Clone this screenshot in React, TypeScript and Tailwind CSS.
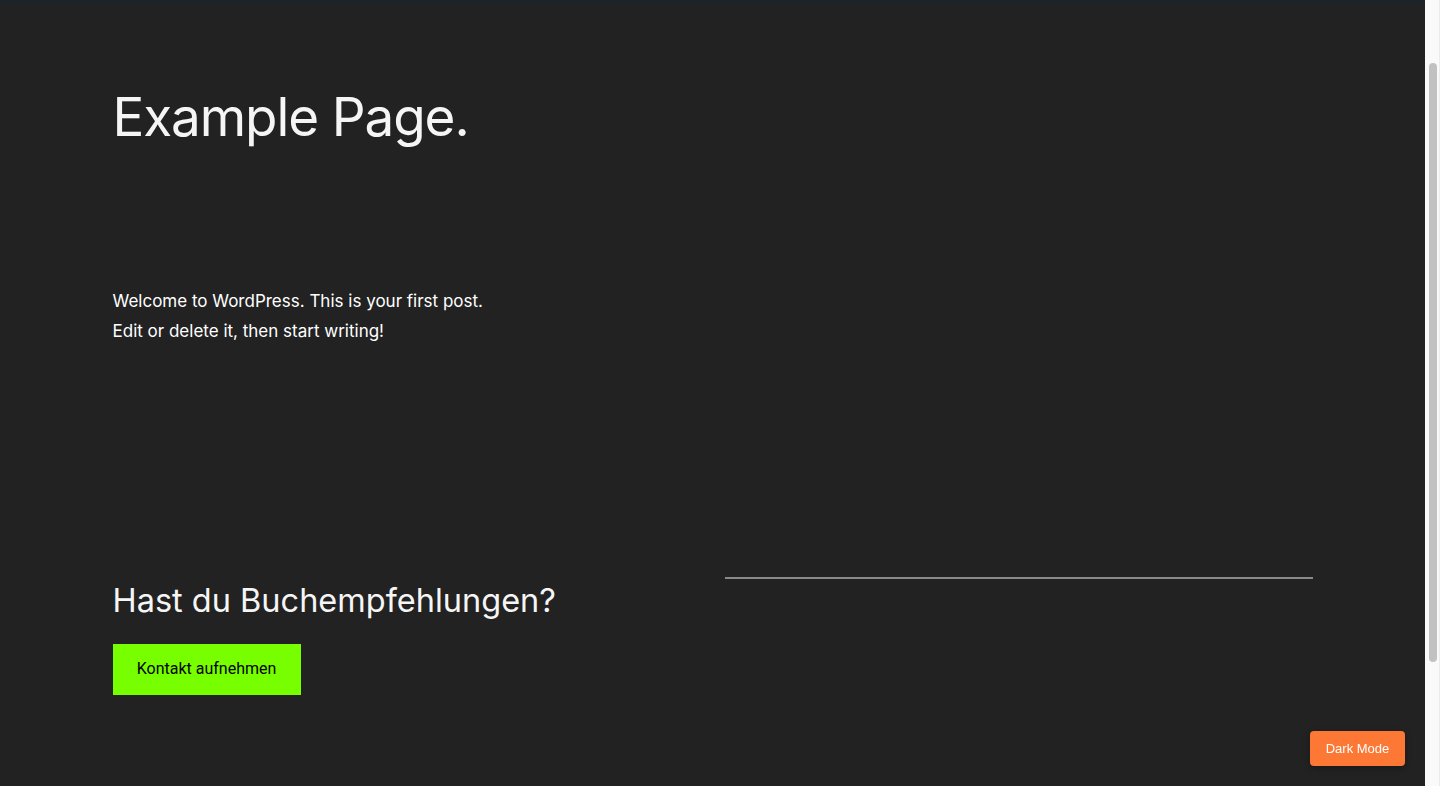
import React from 'react';

const App = () => {
  return (
    <div className="flex h-screen overflow-hidden bg-[#222222] font-['Inter',sans-serif] text-[#f5f5f5]">
      <div className="flex-1 min-w-0">
        {/* admin bar edge */}
        <div className="h-[5px] bg-[#1d2327]" />

        <main className="mx-auto max-w-[1200px]">
          <h1 className="pt-[81px] text-[53px] leading-[1.2] font-normal tracking-[-1.1px]">
            Example Page.
          </h1>

          <div className="mt-[136px] text-[17px] leading-[30px] text-white">
            <p>Welcome to WordPress. This is your first post.</p>
            <p>Edit or delete it, then start writing!</p>
          </div>

          <section className="mt-[231px] grid grid-cols-2 items-start gap-6">
            <div className="pt-[4px]">
              <h2 className="text-[32.5px] leading-[1.2] font-normal">Hast du Buchempfehlungen?</h2>
              <button className="mt-[24px] flex h-[51px] w-[188px] items-center justify-center bg-[#77ff00] font-['Roboto',sans-serif] text-[16px] text-black">
                Kontakt aufnehmen
              </button>
            </div>
            <div>
              <hr className="h-[2px] border-0 bg-[#8a8a8a]" />
            </div>
          </section>
        </main>
      </div>

      {/* scrollbar */}
      <div className="w-[15px] shrink-0 border-r border-[#ececec] bg-[#fafafa] pt-[63px] pl-[4px] pr-[2px]">
        <div className="h-[599px] rounded-full bg-[#c1c1c1]" />
      </div>

      <button className="fixed right-[35px] bottom-5 flex h-[35px] w-[95px] items-center justify-center rounded-[4px] bg-[#fe7835] font-['Liberation_Sans',Arial,sans-serif] text-[13px] font-medium text-white shadow-[0_2px_6px_rgba(0,0,0,0.3)]">
        Dark Mode
      </button>
    </div>
  );
};

export default App;
